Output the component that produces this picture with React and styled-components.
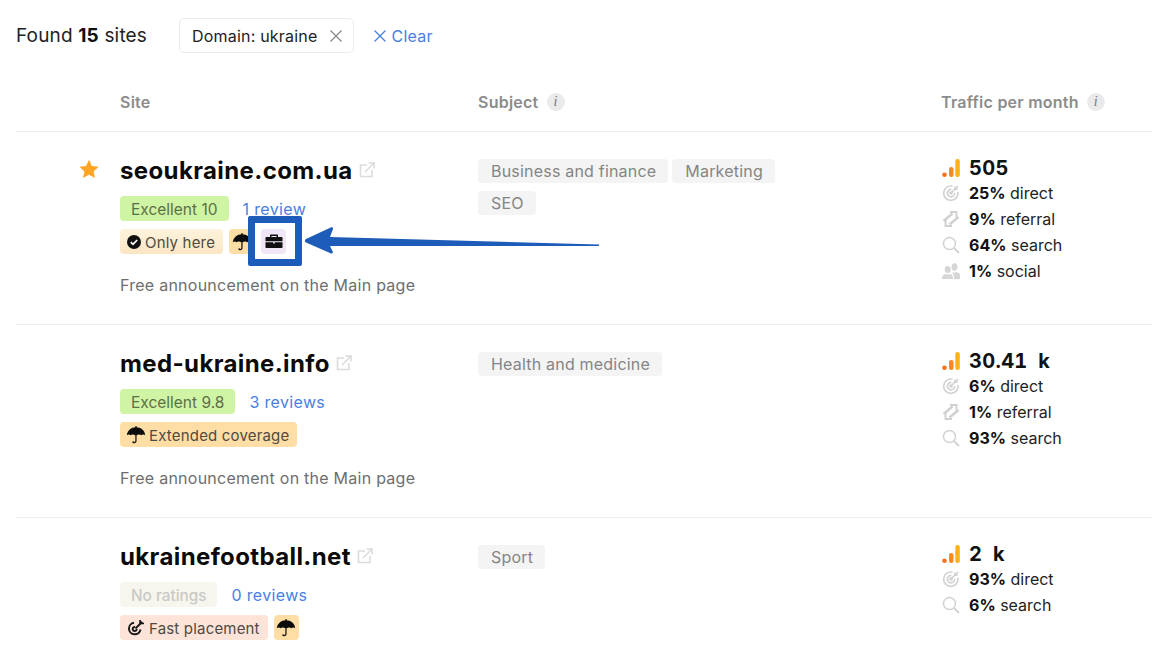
import React from "react";
import styled, { createGlobalStyle } from "styled-components";

const Global = createGlobalStyle`
  html, body { margin: 0; padding: 0; background: #fff; }
  body { font-family: Inter, "Liberation Sans", sans-serif; color: #111; overflow: hidden; }
`;
const Page = styled.div`
  position: relative; width: 1152px; height: 661px; overflow: hidden; padding-left: 16px; box-sizing: border-box;
`;
const TopBar = styled.div`
  display: flex; align-items: center; height: 35px; margin-top: 18px;
`;
const Found = styled.div`
  font-size: 19px; letter-spacing: 0.16px; line-height: 24px; width: 163px; color: #222; b { font-weight: 700; color: #111; }
`;
const Chip = styled.div`
  display: flex; align-items: center; gap: 12px; height: 35px; box-sizing: border-box; padding: 0 10px 0 12px;
  border: 1px solid #ebebeb; border-radius: 5px; font-size: 16px; letter-spacing: 0.2px; color: #222;
`;
const Clear = styled.a`
  display: flex; align-items: center; gap: 4px; margin-left: 19px; font-size: 16px; letter-spacing: 0.25px; color: #4a80e4;
`;
const Grid = `display: grid; grid-template-columns: 104px 358px 463px 1fr;`;
const Head = styled.div`
  ${Grid} height: 79px; box-sizing: border-box; padding-top: 39px; border-bottom: 1px solid #eee;
`;
const HeadCell = styled.div`
  grid-column: ${p => p.$col}; display: flex; gap: 8px; height: 20px; align-items: center;
  font-size: 16px; font-weight: 600; letter-spacing: 0.24px; color: #8c8c8c;
`;
const Info = styled.span`
  width: 18px; height: 18px; border-radius: 50%; background: #eaeaea; color: #777; font: italic 14px/18px "Liberation Serif", serif; text-align: center;
`;
const Row = styled.div`
  ${Grid} height: 193px; box-sizing: border-box; border-bottom: ${p => p.$last ? "none" : "1px solid #eee"}; padding-top: 21px;
`;
const StarCell = styled.div`
  padding: 6px 0 0 62.5px;
`;
const SiteCell = styled.div`display: flex; flex-direction: column; align-items: flex-start;`;
const Title = styled.div`
  display: flex; align-items: center; gap: 6px; height: 34px; font-size: 24px; font-weight: 700; letter-spacing: 0.38px; color: #0b0b0b;
`;
const RatingLine = styled.div`
  display: flex; align-items: center; gap: 14px; margin-top: 9px; height: 25px;
`;
const Rating = styled.span`
  display: inline-flex; align-items: center; height: 25px; box-sizing: border-box; padding: 1px 11px 0; border-radius: 4px;
  font-size: ${p => p.$none ? "15.3px" : "15.5px"};
  background: ${p => p.$none ? "#f6f6ef" : "#cff4a3"}; color: ${p => p.$none ? "#c9c9c4" : "#5c7048"}; ${p => p.$none ? "font-weight:500;" : ""}
`;
const Reviews = styled.a`
  font-size: 16px; letter-spacing: 0.35px; color: #4a80e4;
`;
const Badges = styled.div`
  display: flex; gap: 6px; margin-top: 8px; height: 25px;
`;
const Badge = styled.span`
  display: inline-flex; align-items: center; gap: ${p => p.$tight ? "3px" : "4px"}; height: 25px; box-sizing: border-box;
  padding: 1px 8px 0 ${p => p.$tight ? "6px" : "7px"};
  border-radius: 4px; font-size: 15px; letter-spacing: 0.18px; color: #4f4a42; background: ${p => p.$bg};
`;
const IconBadge = styled.span`
  display: inline-flex; align-items: center; justify-content: center; width: 25px; height: 25px; border-radius: 4px; background: #ffdea6;
`;
const Note = styled.div`
  margin-top: 20px; font-size: 16px; letter-spacing: 0.25px; line-height: 22px; color: #6e6e6e;
`;
const Tags = styled.div`
  display: flex; flex-wrap: wrap; gap: 8px 4px; width: 320px; margin-top: 6px;
`;
const Tag = styled.span`
  display: inline-flex; align-items: center; height: 24px; padding: 0 12px 0 13px; border-radius: 4px; background: #f4f4f4; color: #858585; font-size: 16px; letter-spacing: 0.2px;
`;
const Traffic = styled.div`display: flex; flex-direction: column; padding-top: 2px;`;
const Total = styled.div`
  display: flex; align-items: center; gap: 8px; height: 25px; font-size: 20px; font-weight: 700; color: #111;
  font-variant-numeric: tabular-nums; letter-spacing: 0.3px; word-spacing: 5px;
`;
const Stat = styled.div`
  display: flex; align-items: center; gap: 8px; height: 26px; font-size: 16px; color: #222; b { font-weight: 700; color: #111; }
`;
const IconSlot = styled.span`
  display: inline-flex; width: 20px; justify-content: center;
`;
const Callout = styled.div`
  position: absolute; left: 248px; top: 216px; width: 54px; height: 50px; box-sizing: border-box;
  border: 7px solid #1d5cb8; border-radius: 2px; background: #fff; padding-right: 3px;
  display: flex; align-items: center; justify-content: center;
`;
const BriefBadge = styled.span`
  display: flex; align-items: center; justify-content: center; width: 25px; height: 25px; border-radius: 4px; background: #f0e6f6;
`;
const Arrow = styled.svg`
  position: absolute; left: 300px; top: 222px;
`;

const X = ({ c, s = 14 }) => (
  <svg width={s} height={s} viewBox="0 0 14 14"><path d="M1.500 1.500l11 11M12.500 1.500l-11 11" stroke={c} strokeWidth="1.300" fill="none" /></svg>
);
const Star = () => (
  <svg width="20" height="20" viewBox="0 0 20 20"><path d="M10 .8l2.900 6.200 6.700.8-5 4.600 1.400 6.700L10 15.700l-6 3.400 1.400-6.700-5-4.600 6.700-.8z" fill="#ffa526" /></svg>
);
const Ext = () => (
  <svg width="16" height="16" viewBox="0 0 16 16" fill="none" stroke="#dcdcdc" strokeWidth="1.600">
    <path d="M8 3H1.500v11.500H13V8" /><path d="M6 10L14.500 1.500M9.500 1h5.500v5.500" />
  </svg>
);
const Umbrella = ({ s = 20 }) => (
  <svg width={s} height={s} viewBox="0 0 18 18" fill="#0c0c0c">
    <path d="M9 2C4.600 2 1.200 5 .7 9.300c1-.9 2.400-1 3.400-.1.900-.8 2-.9 3-.4l1.300.5V14.500c0 1-1.400 1-1.700.1l-1.200.4c.6 2 4 1.900 4-.5V9.300l1.300-.5c1-.5 2.100-.4 3 .4 1-.9 2.400-.8 3.400.1C17.300 5 13.400 2 9 2z" />
    <rect x="8.400" y="1" width="1.200" height="2" />
  </svg>
);
const Check = () => (
  <svg width="14" height="14" viewBox="0 0 14 14"><circle cx="7" cy="7" r="7" fill="#111" /><path d="M3.800 7.200l2.200 2.200 4.200-4.400" stroke="#fff" strokeWidth="1.700" fill="none" /></svg>
);
const Dart = () => (
  <svg width="18" height="18" viewBox="0 0 18 18" fill="none" stroke="#1a1a1a" strokeWidth="2">
    <path d="M7 3.800a5.800 5.800 0 1 0 6.500 6.700" /><path d="M8 8a2 2 0 1 0 1.700 2" /><path d="M8.500 9.500L14 4" /><path d="M13 1v3.500H17" fill="#1a1a1a" strokeWidth="1.600" />
  </svg>
);
const Brief = () => (
  <svg width="18" height="16" viewBox="0 0 18 16" fill="#111">
    <path d="M6 1.500h6c.6 0 1 .4 1 1V4h-1.400V3H6.400v1H5V2.500c0-.6.4-1 1-1z" />
    <path d="M1.500 4h15c.6 0 1 .4 1 1v3.300H.5V5c0-.6.4-1 1-1zM.5 9.300h7.700v1.200h1.600V9.300h7.700V14c0 .6-.4 1-1 1h-15c-.6 0-1-.4-1-1z" />
  </svg>
);
const Bars = () => (
  <svg width="18" height="20" viewBox="0 0 18 20">
    <circle cx="2.500" cy="16.800" r="2.300" fill="#f8701a" />
    <rect x="7" y="9" width="4.500" height="10" rx="2" fill="#fb8a18" />
    <rect x="13.300" y="1" width="4.500" height="18" rx="2" fill="#fdb022" />
  </svg>
);
const Target = () => (
  <svg width="18" height="18" viewBox="0 0 18 18" fill="none" stroke="#d2d2d2" strokeWidth="1.700">
    <path d="M10.500 2.200a7.200 7.200 0 1 0 5.400 5.600" /><path d="M9.500 5.500a3.700 3.700 0 1 0 3.200 3.500" /><circle cx="9" cy="9" r="1" fill="#d2d2d2" />
    <path d="M9 9l7-7" /><path d="M13 2.500v2.700h2.700" />
  </svg>
);
const Ref = () => (
  <svg width="18" height="18" viewBox="0 0 18 18" fill="none" stroke="#d0d0d0" strokeWidth="2.400">
    <path d="M1.500 11L10.500 3.500" /><path d="M8 2h6.500v6" strokeWidth="1.900" />
    <path d="M16.500 7L7.500 14.500" /><path d="M10 16H3.500v-6" strokeWidth="1.900" />
  </svg>
);
const Search = () => (
  <svg width="18" height="18" viewBox="0 0 18 18" fill="none" stroke="#d2d2d2" strokeWidth="1.500">
    <circle cx="7.500" cy="7.500" r="6" /><path d="M12 12l5 5" strokeWidth="2" />
  </svg>
);
const Social = () => (
  <svg width="18" height="16" viewBox="0 0 18 16" fill="#d6d6d6">
    <ellipse cx="12.500" cy="4" rx="3" ry="3.800" /><path d="M10 16h8v-3.500c0-1.700-1.700-3-3.500-3.500-1.500.8-2.500.8-3.500.2-.2 0-.5 .1-.7 .2 1.500 1.800 1.700 4 1.700 6.600z" />
    <ellipse cx="5.700" cy="6.500" rx="3" ry="3.500" /><path d="M0 16c0-3.500 1.500-4.500 3.500-5 1.500.8 3 .8 4.500 0 2 .5 3 1.500 3 5z" />
  </svg>
);

const icons = { direct: Target, referral: Ref, search: Search, social: Social };

const rows = [
  {
    name: "seoukraine.com.ua", star: true, rating: "Excellent 10", reviews: "1 review",
    badges: [
      <Badge key="a" $bg="linear-gradient(#fdf3dc,#fbe6c4)"><Check />Only here</Badge>,
      <IconBadge key="b"><Umbrella /></IconBadge>,
    ],
    note: true, tags: ["Business and finance", "Marketing", "SEO"], total: "505",
    stats: [["25%", "direct"], ["9%", "referral"], ["64%", "search"], ["1%", "social"]],
  },
  {
    name: "med-ukraine.info", rating: "Excellent 9.8", reviews: "3 reviews",
    badges: [<Badge key="a" $tight $bg="#ffdea6"><Umbrella />Extended coverage</Badge>],
    note: true, tags: ["Health and medicine"], total: "30.41 k",
    stats: [["6%", "direct"], ["1%", "referral"], ["93%", "search"]],
  },
  {
    name: "ukrainefootball.net", none: true, rating: "No ratings", reviews: "0 reviews",
    badges: [
      <Badge key="a" $bg="#fde3d8"><Dart />Fast placement</Badge>,
      <IconBadge key="b"><Umbrella /></IconBadge>,
    ],
    tags: ["Sport"], total: "2 k",
    stats: [["93%", "direct"], ["6%", "search"]],
  },
];

export default function App() {
  return (
    <Page>
      <Global />
      <TopBar>
        <Found>Found <b>15</b> sites</Found>
        <Chip>Domain: ukraine <X c="#8a8a8a" /></Chip>
        <Clear><X c="#4a80e4" />Clear</Clear>
      </TopBar>
      <Head>
        <HeadCell $col={2}>Site</HeadCell>
        <HeadCell $col={3}>Subject <Info>i</Info></HeadCell>
        <HeadCell $col={4}>Traffic per month <Info>i</Info></HeadCell>
      </Head>
      {rows.map((r, i) => (
        <Row key={r.name} $last={i === 2}>
          <StarCell>{r.star && <Star />}</StarCell>
          <SiteCell>
            <Title>{r.name} <Ext /></Title>
            <RatingLine>
              <Rating $none={r.none}>{r.rating}</Rating>
              <Reviews>{r.reviews}</Reviews>
            </RatingLine>
            <Badges>{r.badges}</Badges>
            {r.note && <Note>Free announcement on the Main page</Note>}
          </SiteCell>
          <div><Tags>{r.tags.map(t => <Tag key={t}>{t}</Tag>)}</Tags></div>
          <Traffic>
            <Total><IconSlot><Bars /></IconSlot>{r.total}</Total>
            {r.stats.map(([p, l]) => {
              const I = icons[l];
              return <Stat key={l}><IconSlot><I /></IconSlot><span><b>{p}</b> {l}</span></Stat>;
            })}
          </Traffic>
        </Row>
      ))}
      <Callout><BriefBadge><Brief /></BriefBadge></Callout>
      <Arrow width="302" height="40" viewBox="0 0 302 40">
        <path d="M299 22.500V24L30 24l2.700 5.500c.5 1.500-.7 2.400-2.200 1.800L6 20.500c-1.500-.7-1.500-2.700 0-3.500L30.700 5.400C32.200 4.800 33.400 5.500 33 7l-3 8z" fill="#1d5cb8" />
      </Arrow>
    </Page>
  );
}
